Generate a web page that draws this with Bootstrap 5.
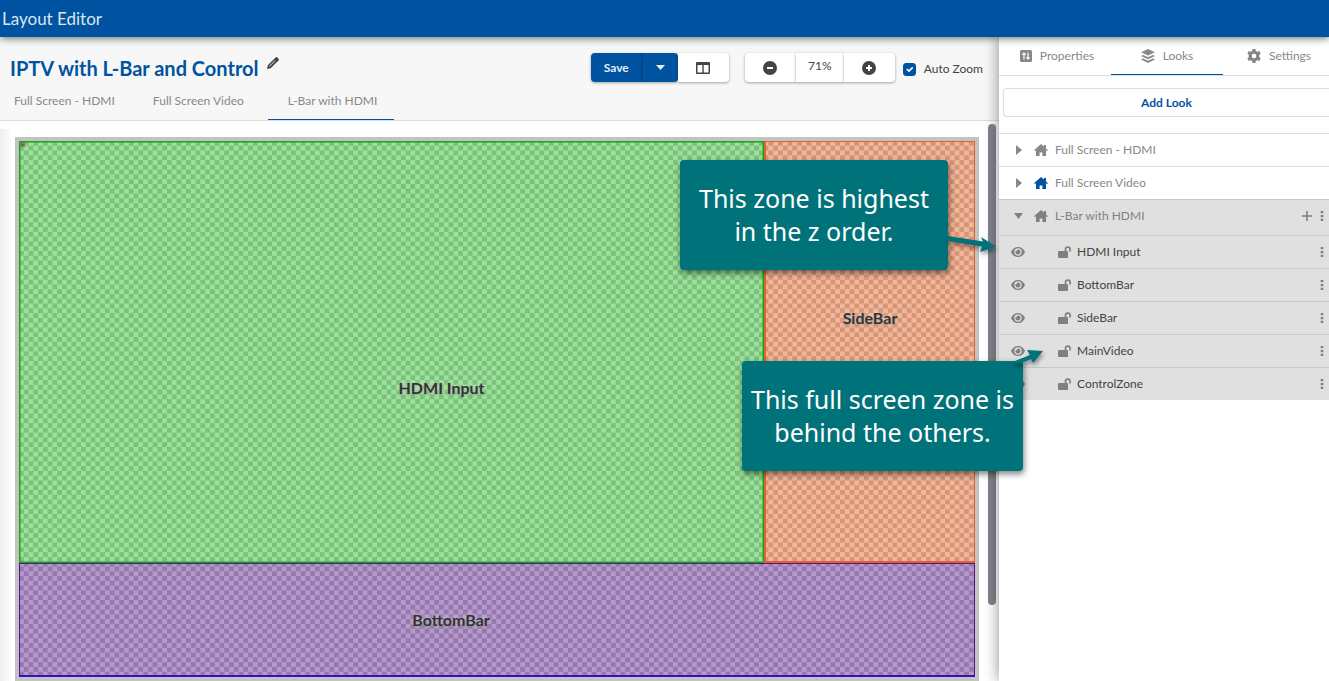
<!DOCTYPE html>
<html lang="en">
<head>
<meta charset="utf-8">
<meta name="viewport" content="width=device-width, initial-scale=1">
<title>Layout Editor</title>
<link href="https://cdn.jsdelivr.net/npm/bootstrap@5.3.0/dist/css/bootstrap.min.css" rel="stylesheet">
<style>
  :root { --brand: #0053a0; --ink: #444; --muted-ink: #888; --line: #ddd; --teal: #00727a; }
  body { font-family: "Century Gothic", Lato, sans-serif; font-size: 12px; line-height: 16px; color: var(--ink); background: #fff; }
  button { font-family: inherit; }
  svg { display: block; }
  .app-bar { height: 37px; background: var(--brand); color: #d9e6f2; padding-left: 2px; box-shadow: 0 1px 8px rgba(0,0,0,.6); z-index: 3; }
  .app-bar h1 { font-size: 17px; line-height: 20px; }
  .editor { min-width: 0; }
  .editor-head { background: #f7f7f7; border-bottom: 1px solid var(--line); height: 84px; padding: 16px 16px 0 10px; }
  .layout-title { color: var(--brand); font-size: 20px; line-height: 30px; font-weight: 700; }
  .plain { border: 0; background: none; padding: 0; color: inherit; }
  .look-tabs { gap: 10px; margin-left: -10px; }
  .look-tabs .plain { color: var(--muted-ink); height: 37px; padding: 0 14px; border-bottom: 1px solid transparent; }
  .look-tabs .active { border-color: var(--brand); padding: 0 17px 0 20px; }
  .tool { height: 29px; border: 0; border-radius: 0; padding: 0; display: flex; align-items: center; justify-content: center; background: #fff; color: var(--ink); width: 51px; box-shadow: 0 1px 3px rgba(0,0,0,.35); }
  .tool:hover { background: #eee; }
  .tool-main, .tool-main:hover { background: var(--brand); color: #e6eef6; font-size: 12px; font-weight: 700; }
  .tool-caret { width: 36px; border-left: 1px solid #004a91; }
  .round-s { border-radius: 4px 0 0 4px; }
  .round-e { border-radius: 0 4px 4px 0; }
  .zoom-value { width: 48px; font-size: 12px; padding-bottom: 3px; }
  .auto-check { width: 13px; height: 13px; margin: 0; border-radius: 1px; }
  .auto-check:checked { background-color: var(--brand); border-color: var(--brand); }
  .canvas-area { padding: 16px 20px 0 15px; }
  .canvas-area::before { content: ""; position: absolute; left: 0; top: 8px; bottom: 0; width: 12px; background: linear-gradient(90deg, #eee, #fff); }
  .scroll-thumb { position: absolute; right: 3px; top: 3px; width: 8px; height: 481px; border-radius: 4px; background: #80848c; }
  .stage { border: 4px solid #c3c3c3; }
  .stage-grid { aspect-ratio: 956 / 536; display: grid; grid-template: 422fr 114fr / 745fr 211fr;
    background: repeating-conic-gradient(#bfbfbf 0 25%, #fff 0 50%) 0 0 / 1% calc(100% / 56); }
  .zone { display: flex; align-items: center; justify-content: center; border: 1px solid; color: #333; font-size: 16px; font-weight: 700; text-shadow: 0 0 4px rgba(255,255,255,.8), 0 1px 3px rgba(0,0,0,.4); }
  .zone-hdmi { background: rgba(55,195,55,.5); border-color: #14a814; box-shadow: inset 0 0 0 1px rgba(20,168,20,.5); padding: 72px 0 0 100px; position: relative; }
  .zone-hdmi::before { content: ""; position: absolute; left: 0; top: 0; width: 5px; height: 5px; border: 2px solid #7d7f5a; background: #333; }
  .zone-side { background: rgba(233,109,49,.5); border-color: #e0622b; border-left-width: 2px; border-bottom-width: 2px; padding-bottom: 68px; }
  .zone-bottom { grid-column: 1 / -1; background: rgba(107,49,153,.5); border-color: #5a0f92; border-bottom: 2px solid #3a12b4; padding-right: 92px; }
  .side { width: 330px; background: #fff; box-shadow: 0 0 14px rgba(0,0,0,.45); z-index: 2; }
  .side-tabs { height: 39px; border-bottom: 1px solid var(--line); overflow: hidden; }
  .side-tabs .plain { flex: 0 0 112px; color: var(--muted-ink); border-bottom: 1px solid transparent; gap: 8px; }
  .side-tabs .active { border-color: var(--brand); }
  .add-look { margin: 12px 0 16px 4px; height: 29px; border: 1px solid var(--line); border-right: 0; border-radius: 4px 0 0 4px; background: #fff; color: var(--brand); font-weight: 700; }
  .look-row { height: 33px; border-top: 1px solid var(--line); padding: 0 5px 0 12px; color: var(--muted-ink); }
  .look-row .slot { width: 14px; }
  .look-home { margin: 0 7px 0 9px; }
  .look-lock { margin: 0 6px 0 33px; }
  .look-open { height: 36px; padding-bottom: 3px; }
  .look-open, .zone-row { background: #e0e0e0; border-color: #c8c8c8; color: #808080; }
  .zone-name { color: var(--ink); }
  .callout { position: absolute; background: var(--teal); color: #fff; font-family: "Noto Sans", sans-serif; font-size: 25px; line-height: 33px; height: 110px; border-radius: 4px; box-shadow: 1px 3px 6px rgba(0,0,0,.5); z-index: 5; }
  .callout svg { position: absolute; overflow: visible; filter: drop-shadow(1px 3px 2px rgba(0,0,0,.4)); }
  .callout-top { top: 160px; right: 381px; width: 268px; }
  .callout-top svg { left: 268px; top: 72px; }
  .callout-low { top: 361px; right: 306px; width: 281px; }
  .callout-low svg { left: 264px; top: -14px; }
</style>
</head>
<body class="vh-100 overflow-hidden d-flex flex-column position-relative">
<svg class="d-none" aria-hidden="true">
  <symbol id="home" viewBox="0 0 14 12"><path fill="currentColor" d="M7 0 0 6.200l.9.9L2 6.300V12h3.600V8.500h2.800V12H12V6.300l1.100.8.9-.9L12 4.400V1h-2v1.600z"/></symbol>
  <symbol id="eye" viewBox="0 0 14 10"><path fill="currentColor" fill-rule="evenodd" d="M7 0C3.700 0 1.200 2 0 5c1.200 3 3.700 5 7 5s5.800-2 7-5c-1.200-3-3.700-5-7-5zm0 8.700A3.700 3.700 0 1 1 7 1.300a3.700 3.700 0 0 1 0 7.400zM7 2.500c-.3 0-.5 0-.8.100A1.300 1.300 0 0 1 4.600 4.200 2.500 2.500 0 1 0 7 2.500z"/></symbol>
  <symbol id="lock" viewBox="0 0 13 12"><path fill="none" stroke="currentColor" stroke-width="1.700" d="M7.500 6V3.400a2.300 2.300 0 0 1 4.600 0V5.500"/><rect y="5" width="10" height="7" rx="1" fill="currentColor"/></symbol>
  <symbol id="dots" viewBox="0 0 4 12"><path fill="currentColor" d="M.7 1h2.600v2.300H.7zM.7 4.900h2.600v2.300H.7zM.7 8.800h2.600v2.300H.7z"/></symbol>
</svg>

<header class="app-bar d-flex align-items-center position-relative flex-shrink-0"><h1 class="m-0 fw-normal">Layout Editor</h1></header>

<main class="d-flex flex-grow-1">
  <section class="editor flex-grow-1">
    <div class="editor-head d-flex flex-column justify-content-between">
      <div class="d-flex justify-content-between">
        <h2 class="layout-title d-flex gap-2 m-0">IPTV with L-Bar and Control
          <button class="plain align-self-start pt-1" aria-label="Rename"><svg width="12" height="12" viewBox="0 0 12 12"><path fill="#444" fill-rule="evenodd" d="M0 12 .8 8.300 8.600.5Q9.400-.3 10.300.5L11.500 1.700Q12.300 2.600 11.500 3.400L3.700 11.200zM2 9.300 8 3.300l.4.400-6 6z"/></svg></button>
        </h2>
        <div class="d-flex align-items-start">
          <button class="tool tool-main round-s">Save</button>
          <button class="tool tool-main tool-caret round-e" aria-label="Save options"><svg width="9" height="5"><path fill="currentColor" d="M0 0h9L4.500 5z"/></svg></button>
          <button class="tool round-e" aria-label="Panels"><svg width="14" height="12" viewBox="0 0 14 12"><path fill="#444" fill-rule="evenodd" d="M1 0h12q1 0 1 1v10q0 1-1 1H1q-1 0-1-1V1q0-1 1-1zm.5 3v7.500h4.800V3zm6.200 0v7.500h4.800V3z"/></svg></button>
          <button class="tool round-s ms-3" aria-label="Zoom out"><svg width="14" height="14"><circle cx="7" cy="7" r="7" fill="#444"/><path stroke="#fff" stroke-width="2" d="M4 7h6"/></svg></button>
          <output class="tool zoom-value">71%</output>
          <button class="tool round-e" aria-label="Zoom in"><svg width="14" height="14"><circle cx="7" cy="7" r="7" fill="#444"/><path stroke="#fff" stroke-width="2" d="M4 7h6M7 4v6"/></svg></button>
          <label class="d-flex align-items-center ms-2 mt-2" for="auto"><input class="form-check-input auto-check me-2" type="checkbox" id="auto" checked>Auto Zoom</label>
        </div>
      </div>
      <nav class="look-tabs d-flex">
        <button class="plain">Full Screen - HDMI</button>
        <button class="plain">Full Screen Video</button>
        <button class="plain active">L-Bar with HDMI</button>
      </nav>
    </div>
    <div class="canvas-area position-relative">
      <div class="stage position-relative">
        <div class="stage-grid">
          <div class="zone zone-hdmi">HDMI Input</div>
          <div class="zone zone-side">SideBar</div>
          <div class="zone zone-bottom">BottomBar</div>
        </div>
      </div>
      <div class="scroll-thumb"></div>
    </div>
  </section>

  <aside class="side flex-shrink-0 d-flex flex-column position-relative">
    <nav class="side-tabs d-flex flex-shrink-0">
      <button class="plain d-flex align-items-center justify-content-center ps-1"><svg width="12" height="12" viewBox="0 0 12 12"><rect width="12" height="12" rx="1.500" fill="currentColor"/><path fill="none" stroke="#fff" stroke-width="1.200" d="M4 9.500V3M2.300 4.700 4 3l1.700 1.700M8 2.500V9M6.300 7.300 8 9l1.700-1.700"/></svg>Properties</button>
      <button class="plain active d-flex align-items-center justify-content-center"><svg width="14" height="14" viewBox="0 0 14 14"><path fill="currentColor" d="M7 0l7 3.300-7 3.300-7-3.300zM0 7l2.200-1L7 8.200 11.800 6 14 7l-7 3.300zM0 10.600l2.200-1L7 11.800l4.800-2.200 2.200 1L7 14z"/></svg>Looks</button>
      <button class="plain d-flex align-items-center justify-content-center"><svg width="14" height="14" viewBox="0 0 14 14"><path fill="currentColor" fill-rule="evenodd" d="M5.500 0h3l.4 2 1.300.8 2-.7 1.500 2.600L12.200 6v2l1.500 1.300-1.500 2.600-2-.7-1.300.8-.4 2h-3l-.4-2-1.300-.8-2 .7L.3 9.300 1.800 8V6L.3 4.700l1.500-2.600 2 .7L5.100 2zM7 4.700a2.300 2.300 0 1 0 0 4.600 2.300 2.300 0 0 0 0-4.600z"/></svg>Settings</button>
    </nav>
    <button class="add-look flex-shrink-0">Add Look</button>
    <div>
      <div class="look-row d-flex align-items-center"><button class="plain slot ps-1" aria-label="Expand"><svg width="8" height="10"><path fill="currentColor" d="M1 0v10l6-5z"/></svg></button><svg class="look-home" width="14" height="12"><use href="#home"/></svg><span>Full Screen - HDMI</span></div>
      <div class="look-row d-flex align-items-center"><button class="plain slot ps-1" aria-label="Expand"><svg width="8" height="10"><path fill="currentColor" d="M1 0v10l6-5z"/></svg></button><svg class="look-home" width="14" height="12" color="#0053a0"><use href="#home"/></svg><span>Full Screen Video</span></div>
      <div class="look-row look-open d-flex align-items-center"><button class="plain slot" aria-label="Collapse"><svg class="mx-auto" width="9" height="6"><path fill="currentColor" d="M0 0h9L4.500 6z"/></svg></button><svg class="look-home" width="14" height="12"><use href="#home"/></svg><span>L-Bar with HDMI</span><button class="plain ms-auto me-2" aria-label="Add zone"><svg width="10" height="10"><path stroke="currentColor" stroke-width="1.500" d="M5 0v10M0 5h10"/></svg></button><button class="plain" aria-label="More"><svg width="4" height="12"><use href="#dots"/></svg></button></div>
      <div class="look-row zone-row d-flex align-items-center"><button class="plain slot" aria-label="Visible"><svg width="14" height="10"><use href="#eye"/></svg></button><svg class="look-lock" width="13" height="12"><use href="#lock"/></svg><span class="zone-name">HDMI Input</span><button class="plain ms-auto" aria-label="More"><svg width="4" height="12"><use href="#dots"/></svg></button></div>
      <div class="look-row zone-row d-flex align-items-center"><button class="plain slot" aria-label="Visible"><svg width="14" height="10"><use href="#eye"/></svg></button><svg class="look-lock" width="13" height="12"><use href="#lock"/></svg><span class="zone-name">BottomBar</span><button class="plain ms-auto" aria-label="More"><svg width="4" height="12"><use href="#dots"/></svg></button></div>
      <div class="look-row zone-row d-flex align-items-center"><button class="plain slot" aria-label="Visible"><svg width="14" height="10"><use href="#eye"/></svg></button><svg class="look-lock" width="13" height="12"><use href="#lock"/></svg><span class="zone-name">SideBar</span><button class="plain ms-auto" aria-label="More"><svg width="4" height="12"><use href="#dots"/></svg></button></div>
      <div class="look-row zone-row d-flex align-items-center"><button class="plain slot" aria-label="Visible"><svg width="14" height="10"><use href="#eye"/></svg></button><svg class="look-lock" width="13" height="12"><use href="#lock"/></svg><span class="zone-name">MainVideo</span><button class="plain ms-auto" aria-label="More"><svg width="4" height="12"><use href="#dots"/></svg></button></div>
      <div class="look-row zone-row d-flex align-items-center"><button class="plain slot" aria-label="Visible"><svg width="14" height="10"><use href="#eye"/></svg></button><svg class="look-lock" width="13" height="12"><use href="#lock"/></svg><span class="zone-name">ControlZone</span><button class="plain ms-auto" aria-label="More"><svg width="4" height="12"><use href="#dots"/></svg></button></div>
    </div>
  </aside>
</main>

<div class="callout callout-top d-flex align-items-center justify-content-center text-center">This zone is highest<br>in the z order.<svg width="48" height="24"><path fill="#00727a" d="M0 4 35 9.500 33 5 48 14.500 32 20 34 14.500 0 9z"/></svg></div>
<div class="callout callout-low d-flex align-items-center justify-content-center text-center">This full screen zone is<br>behind the others.<svg width="38" height="16"><path fill="#00727a" d="M4 16 24 8 21 3 37 4 27 16 25 12 16 16z"/></svg></div>
<script src="https://cdn.jsdelivr.net/npm/bootstrap@5.3.0/dist/js/bootstrap.bundle.min.js"></script>
</body>
</html>
